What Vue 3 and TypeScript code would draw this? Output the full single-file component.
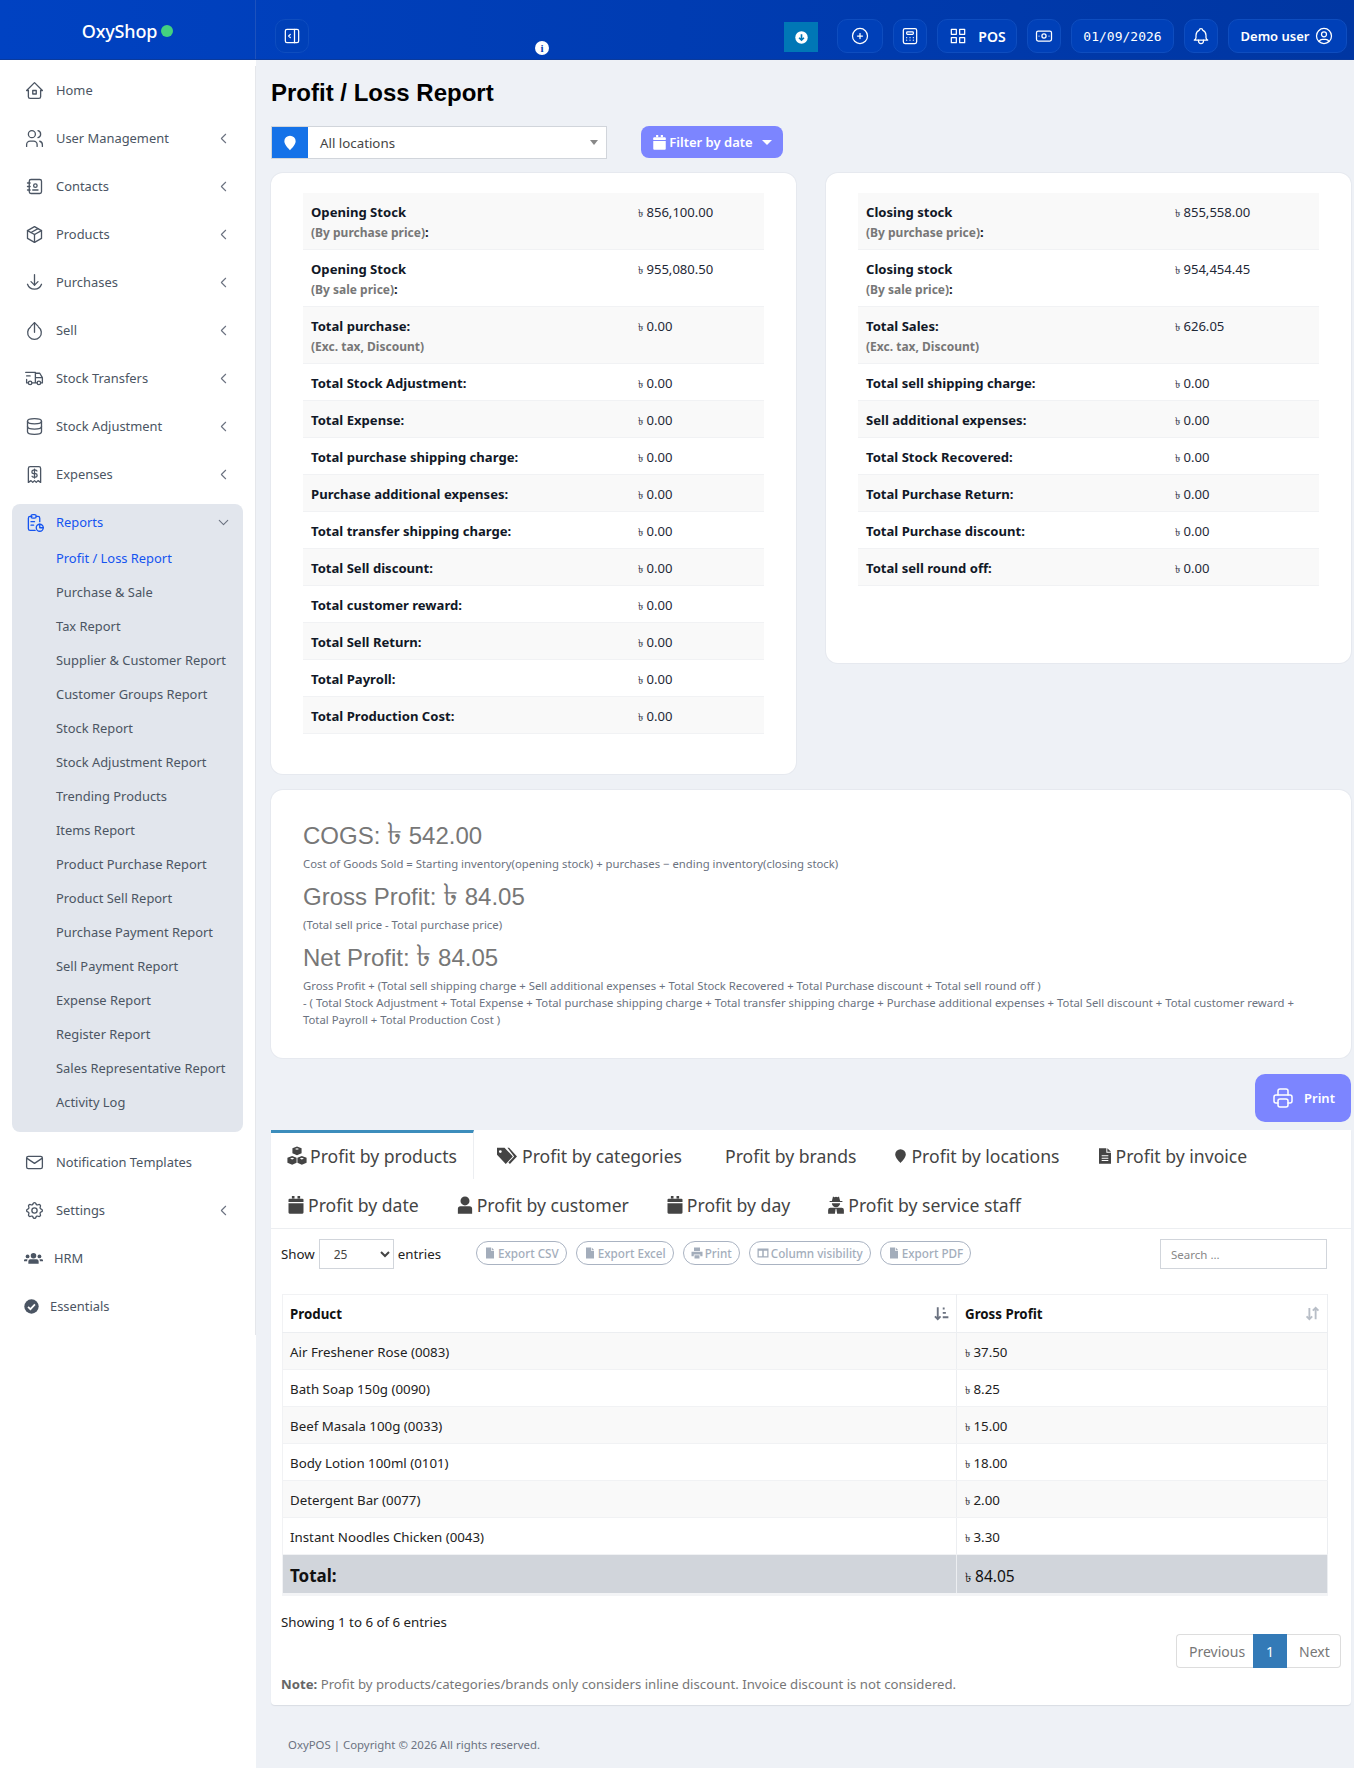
<script setup lang="ts">
import { h } from 'vue'

const P: Record<string, string[]> = {
  home: ['M5 12l-2 0l9 -9l9 9l-2 0', 'M5 12v7a2 2 0 0 0 2 2h10a2 2 0 0 0 2 -2v-7', 'M10 12h4v4h-4z'],
  users: ['M9 7m-4 0a4 4 0 1 0 8 0a4 4 0 1 0 -8 0', 'M3 21v-2a4 4 0 0 1 4 -4h4a4 4 0 0 1 4 4v2', 'M16 3.13a4 4 0 0 1 0 7.75', 'M21 21v-2a4 4 0 0 0 -3 -3.85'],
  book: ['M20 6v12a2 2 0 0 1 -2 2h-10a2 2 0 0 1 -2 -2v-12a2 2 0 0 1 2 -2h10a2 2 0 0 1 2 2z', 'M10 16h6', 'M13 11m-2 0a2 2 0 1 0 4 0a2 2 0 1 0 -4 0', 'M4 8h3', 'M4 12h3', 'M4 16h3'],
  box: ['M12 3l8 4.5l0 9l-8 4.5l-8 -4.5l0 -9l8 -4.5', 'M12 12l8 -4.5', 'M12 12l0 9', 'M12 12l-8 -4.5', 'M16 5.25l-8 4.5'],
  down: ['M12 3v12', 'M8 11l4 4l4 -4', 'M4 14a8.5 8.500 0 0 0 16 0'],
  up: ['M12 14v-11', 'M8 7l4 -4l4 4', 'M7.500 8a7.800 7.800 0 1 0 9 0'],
  truck: ['M7 17m-2 0a2 2 0 1 0 4 0a2 2 0 1 0 -4 0', 'M17 17m-2 0a2 2 0 1 0 4 0a2 2 0 1 0 -4 0', 'M5 17h-2v-4m-1 -8h11v12m-4 0h6m4 0h2v-6h-8m0 -5h5l3 5', 'M3 9l4 0'],
  db: ['M12 6m-8 0a8 3 0 1 0 16 0a8 3 0 1 0 -16 0', 'M4 6v6a8 3 0 0 0 16 0v-6', 'M4 12v6a8 3 0 0 0 16 0v-6'],
  receipt: ['M5 21v-16a2 2 0 0 1 2 -2h10a2 2 0 0 1 2 2v16l-3 -2l-2 2l-2 -2l-2 2l-2 -2l-3 2', 'M14.8 8a2 2 0 0 0 -1.8 -1h-2a2 2 0 1 0 0 4h2a2 2 0 1 1 0 4h-2a2 2 0 0 1 -1.8 -1', 'M12 6v10'],
  report: ['M9 5h-2a2 2 0 0 0 -2 2v12a2 2 0 0 0 2 2h5.697', 'M18 14v4h4', 'M18 11v-4a2 2 0 0 0 -2 -2h-2', 'M8 3m0 2a2 2 0 0 1 2 -2h2a2 2 0 0 1 2 2v0a2 2 0 0 1 -2 2h-2a2 2 0 0 1 -2 -2z', 'M18 18m-4 0a4 4 0 1 0 8 0a4 4 0 1 0 -8 0', 'M8 11h4', 'M8 15h3'],
  mail: ['M3 7a2 2 0 0 1 2 -2h14a2 2 0 0 1 2 2v10a2 2 0 0 1 -2 2h-14a2 2 0 0 1 -2 -2v-10z', 'M3 7l9 6l9 -6'],
  gear: ['M10.325 4.317c.426 -1.756 2.924 -1.756 3.35 0a1.724 1.724 0 0 0 2.573 1.066c1.543 -.94 3.31 .826 2.37 2.37a1.724 1.724 0 0 0 1.065 2.572c1.756 .426 1.756 2.924 0 3.35a1.724 1.724 0 0 0 -1.066 2.573c.94 1.543 -.826 3.31 -2.37 2.37a1.724 1.724 0 0 0 -2.572 1.065c-.426 1.756 -2.924 1.756 -3.35 0a1.724 1.724 0 0 0 -2.573 -1.066c-1.543 .94 -3.31 -.826 -2.37 -2.37a1.724 1.724 0 0 0 -1.065 -2.572c-1.756 -.426 -1.756 -2.924 0 -3.35a1.724 1.724 0 0 0 1.066 -2.573c-.94 -1.543 .826 -3.31 2.37 -2.37c1 .608 2.296 .07 2.572 -1.065z', 'M9 12a3 3 0 1 0 6 0a3 3 0 0 0 -6 0'],
  chevL: ['M15 6l-6 6l6 6'],
  chevD: ['M6 9l6 6l6 -6'],
  calc: ['M4 3m0 2a2 2 0 0 1 2 -2h12a2 2 0 0 1 2 2v14a2 2 0 0 1 -2 2h-12a2 2 0 0 1 -2 -2z', 'M8 7m0 1a1 1 0 0 1 1 -1h6a1 1 0 0 1 1 1v1a1 1 0 0 1 -1 1h-6a1 1 0 0 1 -1 -1z', 'M8 14v.01', 'M12 14v.01', 'M16 14v.01', 'M8 17v.01', 'M12 17v.01', 'M16 17v.01'],
  plus: ['M12 12m-9 0a9 9 0 1 0 18 0a9 9 0 1 0 -18 0', 'M9 12h6', 'M12 9v6'],
  grid: ['M4 4h6v6h-6z', 'M14 4h6v6h-6z', 'M4 14h6v6h-6z', 'M14 14h6v6h-6z'],
  cash: ['M3 8a2 2 0 0 1 2 -2h14a2 2 0 0 1 2 2v8a2 2 0 0 1 -2 2h-14a2 2 0 0 1 -2 -2z', 'M12 12m-2.5 0a2.5 2.5 0 1 0 5 0a2.5 2.5 0 1 0 -5 0', 'M6 12h.01', 'M18 12h.01'],
  bell: ['M10 5a2 2 0 1 1 4 0a7 7 0 0 1 4 6v3a4 4 0 0 0 2 3h-16a4 4 0 0 0 2 -3v-3a7 7 0 0 1 4 -6', 'M9 17v1a3 3 0 0 0 6 0v-1'],
  userc: ['M12 12m-9 0a9 9 0 1 0 18 0a9 9 0 1 0 -18 0', 'M12 10m-3 0a3 3 0 1 0 6 0a3 3 0 1 0 -6 0', 'M6.168 18.849a4 4 0 0 1 3.832 -2.849h4a4 4 0 0 1 3.834 2.855'],
  side: ['M4 6a2 2 0 0 1 2 -2h12a2 2 0 0 1 2 2v12a2 2 0 0 1 -2 2h-12a2 2 0 0 1 -2 -2z', 'M15 4v16', 'M10 10l-2 2l2 2'],
  print: ['M17 17h2a2 2 0 0 0 2 -2v-4a2 2 0 0 0 -2 -2h-14a2 2 0 0 0 -2 2v4a2 2 0 0 0 2 2h2', 'M17 9v-4a2 2 0 0 0 -2 -2h-6a2 2 0 0 0 -2 2v4', 'M7 15a2 2 0 0 1 2 -2h6a2 2 0 0 1 2 2v4a2 2 0 0 1 -2 2h-6a2 2 0 0 1 -2 -2z'],
}
const S: Record<string, string[]> = {
  pin: ['M12 1a8.500 8.500 0 0 0 -8.500 8.500c0 5.500 8.500 13.500 8.500 13.500s8.500 -8 8.500 -13.500a8.500 8.500 0 0 0 -8.500 -8.500z'],
  cal: ['M6.500 0h3.500v3.500h-3.500z', 'M14 0h3.500v3.500h-3.500z', 'M2 5a1.500 1.500 0 0 1 1.500 -1.500h17a1.500 1.500 0 0 1 1.500 1.500v3h-20z', 'M2 9.500h20v12.500a1.500 1.500 0 0 1 -1.500 1.500h-17a1.500 1.500 0 0 1 -1.500 -1.500z'],
  cubes: ['M12 .5l5.500 2.200v6l-5.500 2.300l-5.500 -2.300v-6z M12 2.600l-2.500 1l2.500 1l2.500 -1z', 'M6.200 12l5.300 2.200v6l-5.300 2.300l-5.700 -2.300v-6z M6.200 14.100l-2.500 1l2.500 1l2.500 -1z', 'M17.800 12l5.700 2.200v6l-5.700 2.300l-5.300 -2.300v-6z M17.800 14.100l-2.500 1l2.500 1l2.500 -1z'],
  tags: ['M0 2h9l10 10.500l-8.500 9l-10.500 -11z M4 5a1.700 1.700 0 1 0 0 3.400a1.700 1.700 0 0 0 0 -3.400z', 'M12.500 2h2l9.500 10.500l-8.500 9l-1.800 -1.800l6.800 -7.200z'],
  file: ['M3 .5h11v6.500h7v16.500h-18z M7 11v1.500h10v-1.500z M7 14.500v1.500h10v-1.500z M7 18v1.500h10v-1.500z', 'M15.500 .5l5.500 5h-5.500z'],
  user: ['M12 .5a6 6 0 1 0 0 12a6 6 0 0 0 0 -12z', 'M6 13.500h12a3.500 3.500 0 0 1 3.500 3.500v6.500h-19v-6.500a3.500 3.500 0 0 1 3.500 -3.500z'],
  spy: ['M8 .5l2 1l2 -.5l2 .5l2 -1l1.500 6h3v1.500h-17v-1.500h3z', 'M6.500 9.500h11a5.500 5.500 0 0 1 -11 0z', 'M4.500 15.500h15a3 3 0 0 1 3 3v5h-9l-1 -6.500h-1l-1 6.500h-9v-5a3 3 0 0 1 3 -3z'],
  hrm: ['M12 5a3.500 3.500 0 1 0 0 7a3.500 3.500 0 0 0 0 -7z', 'M4.500 7a2.400 2.400 0 1 0 0 4.800a2.400 2.400 0 0 0 0 -4.800z', 'M19.500 7a2.400 2.400 0 1 0 0 4.800a2.400 2.400 0 0 0 0 -4.800z', 'M8 13h8a2.500 2.500 0 0 1 2.500 2.500v3h-13v-3a2.500 2.500 0 0 1 2.500 -2.500z', 'M1 13h3.500a4 4 0 0 0 -.5 2v.5h-4v-1a1.500 1.500 0 0 1 1 -1.500z', 'M19.500 13h3.500a1.500 1.500 0 0 1 1 1.500v1h-4v-.5a4 4 0 0 0 -.5 -2z'],
  csv: ['M4 1h10v6.500h6v15.500h-16z', 'M15.500 1l4.500 5h-4.500z'],
  cols: ['M1 3h22v18h-22z M3.500 7.500v11h7v-11z M13.500 7.500v11h7v-11z'],
  sprint: ['M6 1h12v7h-12z', 'M1 9.500h22v9h-4.500v-3.500h-13v3.500h-4.500z', 'M7 16.500h10v6.500h-10z'],
}

const Ico = (props: { n: string }) => {
  const solid = S[props.n]
  return h(
    'svg',
    {
      class: 'ico',
      viewBox: '0 0 24 24',
      fill: solid ? 'currentColor' : 'none',
      stroke: solid ? 'none' : 'currentColor',
      'stroke-width': solid ? undefined : 1.5,
      'stroke-linecap': 'round',
      'stroke-linejoin': 'round',
      'fill-rule': 'evenodd',
    },
    (solid || P[props.n] || []).map((d) => h('path', { d })),
  )
}

const menuTop = [
  { n: 'home', t: 'Home', c: false },
  { n: 'users', t: 'User Management', c: true },
  { n: 'book', t: 'Contacts', c: true },
  { n: 'box', t: 'Products', c: true },
  { n: 'down', t: 'Purchases', c: true },
  { n: 'up', t: 'Sell', c: true },
  { n: 'truck', t: 'Stock Transfers', c: true },
  { n: 'db', t: 'Stock Adjustment', c: true },
  { n: 'receipt', t: 'Expenses', c: true },
]
const subs = ['Profit / Loss Report', 'Purchase & Sale', 'Tax Report', 'Supplier & Customer Report', 'Customer Groups Report', 'Stock Report', 'Stock Adjustment Report', 'Trending Products', 'Items Report', 'Product Purchase Report', 'Product Sell Report', 'Purchase Payment Report', 'Sell Payment Report', 'Expense Report', 'Register Report', 'Sales Representative Report', 'Activity Log']

type Row = { l: string; s?: string; c?: boolean; v: string }
const left: Row[] = [
  { l: 'Opening Stock', s: '(By purchase price)', c: true, v: '856,100.00' },
  { l: 'Opening Stock', s: '(By sale price)', c: true, v: '955,080.50' },
  { l: 'Total purchase:', s: '(Exc. tax, Discount)', v: '0.00' },
  { l: 'Total Stock Adjustment:', v: '0.00' },
  { l: 'Total Expense:', v: '0.00' },
  { l: 'Total purchase shipping charge:', v: '0.00' },
  { l: 'Purchase additional expenses:', v: '0.00' },
  { l: 'Total transfer shipping charge:', v: '0.00' },
  { l: 'Total Sell discount:', v: '0.00' },
  { l: 'Total customer reward:', v: '0.00' },
  { l: 'Total Sell Return:', v: '0.00' },
  { l: 'Total Payroll:', v: '0.00' },
  { l: 'Total Production Cost:', v: '0.00' },
]
const right: Row[] = [
  { l: 'Closing stock', s: '(By purchase price)', c: true, v: '855,558.00' },
  { l: 'Closing stock', s: '(By sale price)', c: true, v: '954,454.45' },
  { l: 'Total Sales:', s: '(Exc. tax, Discount)', v: '626.05' },
  { l: 'Total sell shipping charge:', v: '0.00' },
  { l: 'Sell additional expenses:', v: '0.00' },
  { l: 'Total Stock Recovered:', v: '0.00' },
  { l: 'Total Purchase Return:', v: '0.00' },
  { l: 'Total Purchase discount:', v: '0.00' },
  { l: 'Total sell round off:', v: '0.00' },
]
const panels = [
  { k: 'a', rows: left },
  { k: 'b', rows: right },
]
const tabs = [
  { n: 'cubes', t: 'Profit by products' },
  { n: 'tags', t: 'Profit by categories' },
  { n: '', t: 'Profit by brands' },
  { n: 'pin', t: 'Profit by locations' },
  { n: 'file', t: 'Profit by invoice' },
  { n: 'cal', t: 'Profit by date' },
  { n: 'user', t: 'Profit by customer' },
  { n: 'cal', t: 'Profit by day' },
  { n: 'spy', t: 'Profit by service staff' },
]
const exportsList = [
  { n: 'csv', t: 'Export CSV' },
  { n: 'csv', t: 'Export Excel' },
  { n: 'sprint', t: 'Print' },
  { n: 'cols', t: 'Column visibility' },
  { n: 'csv', t: 'Export PDF' },
]
const products = [
  ['Air Freshener Rose (0083)', '37.50'],
  ['Bath Soap 150g (0090)', '8.25'],
  ['Beef Masala 100g (0033)', '15.00'],
  ['Body Lotion 100ml (0101)', '18.00'],
  ['Detergent Bar (0077)', '2.00'],
  ['Instant Noodles Chicken (0043)', '3.30'],
]
</script>

<template>
  <div class="page">
    <header class="top">
      <div class="brand"><span class="brand-name">OxyShop</span><i class="dot"></i></div>
      <div class="top-main">
        <button class="tbtn sq"><Ico n="side" /></button>
        <span class="info">i</span>
        <div class="top-right">
          <span class="teal">
            <svg class="ico" viewBox="0 0 24 24"><circle cx="12" cy="12" r="11.500" fill="#fff" /><path d="M12 6v11M7.500 12.500l4.500 4.500l4.500 -4.500" fill="none" stroke="#0077b6" stroke-width="3" /></svg>
          </span>
          <button class="tbtn wplus"><Ico n="plus" /></button>
          <button class="tbtn sq"><Ico n="calc" /></button>
          <button class="tbtn pos"><Ico n="grid" /><b>POS</b></button>
          <button class="tbtn sq"><Ico n="cash" /></button>
          <button class="tbtn date">01/09/2026</button>
          <button class="tbtn sq"><Ico n="bell" /></button>
          <button class="tbtn usr"><b>Demo user</b><Ico n="userc" /></button>
        </div>
      </div>
    </header>

    <div class="body">
      <aside class="side">
        <nav class="nav">
          <a v-for="m in menuTop" :key="m.t" class="item">
            <Ico :n="m.n" /><span class="lbl">{{ m.t }}</span>
            <Ico v-if="m.c" n="chevL" class="chev" />
          </a>
          <div class="group">
            <a class="ghead"><Ico n="report" /><span class="lbl">Reports</span><Ico n="chevD" class="chev" /></a>
            <a v-for="(s, i) in subs" :key="s" class="sub" :class="{ on: i === 0 }">{{ s }}</a>
          </div>
          <a class="item"><Ico n="mail" /><span class="lbl">Notification Templates</span></a>
          <a class="item"><Ico n="gear" /><span class="lbl">Settings</span><Ico n="chevL" class="chev" /></a>
          <a class="item hrm"><Ico n="hrm" /><span class="lbl">HRM</span></a>
          <a class="item ess"><svg class="ico" viewBox="0 0 24 24"><circle cx="12" cy="12" r="11.500" fill="currentColor" /><path d="M6.500 12.500l3.800 3.800l7.200 -7.600" fill="none" stroke="#fff" stroke-width="2.800" /></svg><span class="lbl">Essentials</span></a>
        </nav>
      </aside>

      <main class="main">
        <h1 class="title">Profit / Loss Report</h1>
        <div class="filters">
          <div class="loc">
            <span class="loc-ic"><Ico n="pin" /></span>
            <span class="loc-t">All locations</span>
            <i class="caret"></i>
          </div>
          <button class="fbtn"><Ico n="cal" />Filter by date<i class="caret w"></i></button>
        </div>

        <div class="cols">
          <section v-for="p in panels" :key="p.k" class="card stat" :class="p.k">
            <table class="st">
              <tbody>
                <tr v-for="(r, i) in p.rows" :key="i">
                  <th>{{ r.l }}<template v-if="r.s"><br /><small>{{ r.s }}</small><template v-if="r.c">:</template></template></th>
                  <td><span class="tk">৳</span> {{ r.v }}</td>
                </tr>
              </tbody>
            </table>
          </section>
        </div>

        <section class="card sum">
          <h3>COGS: <span class="bn">৳</span> 542.00</h3>
          <p>Cost of Goods Sold = Starting inventory(opening stock) + purchases − ending inventory(closing stock)</p>
          <h3>Gross Profit: <span class="bn">৳</span> 84.05</h3>
          <p>(Total sell price - Total purchase price)</p>
          <h3>Net Profit: <span class="bn">৳</span> 84.05</h3>
          <p>Gross Profit + (Total sell shipping charge + Sell additional expenses + Total Stock Recovered + Total Purchase discount + Total sell round off )<br />- ( Total Stock Adjustment + Total Expense + Total purchase shipping charge + Total transfer shipping charge + Purchase additional expenses + Total Sell discount + Total customer reward + Total Payroll + Total Production Cost )</p>
        </section>

        <div class="print-row"><button class="pbtn"><Ico n="print" /><b>Print</b></button></div>

        <section class="tabcard">
          <div class="tabs">
            <a v-for="(t, i) in tabs" :key="t.t" class="tab" :class="{ on: i === 0, noic: !t.n }">
              <Ico v-if="t.n" :n="t.n" :class="'i-' + t.n" /><span>{{ t.t }}</span>
            </a>
          </div>
          <div class="pane">
            <div class="tools">
              <label class="show">Show
                <select class="len"><option>25</option></select>
                entries</label>
              <div class="exports">
                <button v-for="e in exportsList" :key="e.t" class="xb"><Ico :n="e.n" />{{ e.t }}</button>
              </div>
              <input class="search" placeholder="Search ..." />
            </div>
            <table class="dt">
              <thead>
                <tr>
                  <th>Product
                    <svg class="sort" viewBox="0 0 24 24" fill="none" stroke="#6b7280" stroke-width="3"><path d="M6 2v19M1.500 16.500L6 21l4.500 -4.500" /><path d="M14 4h3M14 11h5M14 18h9" /></svg>
                  </th>
                  <th>Gross Profit
                    <svg class="sort" viewBox="0 0 24 24" fill="none" stroke="#b8bec7" stroke-width="3"><path d="M7 3v18M2.500 16.500L7 21l4.500 -4.500" /><path d="M17 21V3M12.500 7.500L17 3l4.500 4.500" /></svg>
                  </th>
                </tr>
              </thead>
              <tbody>
                <tr v-for="r in products" :key="r[0]">
                  <td>{{ r[0] }}</td>
                  <td><span class="tk">৳</span> {{ r[1] }}</td>
                </tr>
              </tbody>
              <tfoot>
                <tr>
                  <td class="tl">Total:</td>
                  <td class="tv"><span class="tk">৳</span> 84.05</td>
                </tr>
              </tfoot>
            </table>
            <div class="showing">Showing 1 to 6 of 6 entries</div>
            <div class="pager">
              <a class="pg">Previous</a><a class="pg cur">1</a><a class="pg">Next</a>
            </div>
            <p class="note"><b>Note:</b> Profit by products/categories/brands only considers inline discount. Invoice discount is not considered.</p>
          </div>
        </section>
        <footer class="foot">OxyPOS | Copyright © 2026 All rights reserved.</footer>
      </main>
    </div>
  </div>
</template>

<style>
html, body { margin: 0; background: #fff; }
</style>

<style scoped>
* { box-sizing: border-box; }
.page { width: 1354px; font-family: "Noto Sans", "Open Sans", sans-serif; font-size: 13.3px; color: #111827; }
.ico { width: 21px; height: 21px; flex: none; display: block; }
button { font-family: inherit; cursor: pointer; padding: 0; }

.top { display: flex; height: 60px; background: linear-gradient(90deg, #0042c2, #0036a2); border-bottom: 1px solid #0a3a9c; }
.brand { width: 256px; flex: none; display: flex; align-items: center; justify-content: center; gap: 4px; border-right: 1px solid #1d52bd; padding-top: 2px; }
.brand-name { color: #fff; font-size: 18px; font-weight: 500; letter-spacing: -.2px; }
.dot { width: 12px; height: 12px; border-radius: 50%; background: #43d17f; }
.top-main { flex: 1; display: flex; align-items: center; padding: 13px 7px 0 19px; position: relative; }
.info { position: absolute; left: 279px; top: 41px; width: 14px; height: 14px; border-radius: 50%; background: #fff; color: #0a3fb0; font: 700 11px/14px "Liberation Serif", serif; text-align: center; }
.tbtn { height: 34px; border-radius: 10px; background: #0040b8; border: 1px solid #0e4dbf; color: #fff; display: flex; align-items: center; justify-content: center; }
.tbtn.sq { width: 34px; }
.tbtn.wplus { width: 46px; }
.tbtn .ico { width: 20px; height: 20px; }
.top-right { margin-left: auto; display: flex; align-items: center; gap: 10px; }
.teal { width: 34px; height: 30px; margin-top: 2px; margin-right: 9px; background: #0077b6; display: flex; align-items: center; justify-content: center; color: #fff; }
.teal .ico { width: 13px; height: 13px; }
.pos { width: 80px; gap: 10px; font-size: 14px; }
.pos b, .usr b { font-weight: 600; }
.date { width: 103px; font: 13px "DejaVu Sans Mono", monospace; }
.usr { width: 119px; gap: 5px; font-size: 13px; }

.body { display: flex; align-items: stretch; }
.side { width: 256px; flex: none; background: #fff; padding-top: 6px; }
.nav { border-right: 1px solid #e5e7eb; height: 1269px; width: 256px; font-size: 12.9px; }
.item { height: 48px; display: flex; align-items: center; padding: 0 24px 0 24px; gap: 11px; color: #4b5563; }
.lbl { flex: 1; white-space: nowrap; }
.chev { width: 17px; height: 17px; color: #6b7280; margin-right: -1px; }
.group { margin: 6px 12px 6px; background: #e2e6ed; border-radius: 8px; padding-bottom: 13px; height: 628px; }
.ghead { height: 36px; display: flex; align-items: center; padding: 0 12px 0 12px; gap: 11px; color: #1554f0; }
.ghead .chev { color: #6b7280; }
.sub { height: 34px; display: flex; align-items: center; padding: 1px 0 0 44px; color: #4b5563; white-space: nowrap; }
.sub.on { color: #1554f0; }
.hrm { gap: 11px; }
.hrm .ico { width: 19px; height: 19px; }
.ess { gap: 11px; }
.ess .ico { width: 15px; height: 15px; }

.main { flex: 1; min-width: 0; background: #eef1f6; padding: 0 3px 0 15px; height: 1708px; }
.title { margin: 0; height: 66px; font: 700 24px/66px "Liberation Sans", Arial, sans-serif; color: #000; }
.filters { display: flex; height: 47px; gap: 34px; align-items: flex-start; }
.loc { width: 336px; height: 33px; display: flex; align-items: center; background: #fff; border: 1px solid #d1d5db; }
.loc-ic { width: 36px; height: 31px; background: #1572e8; color: #fff; display: flex; align-items: center; justify-content: center; }
.loc-ic .ico { width: 16px; height: 16px; }
.loc-t { flex: 1; padding-left: 12px; color: #444; font-size: 13.3px; }
.caret { width: 0; height: 0; border-left: 4px solid transparent; border-right: 4px solid transparent; border-top: 5px solid #888; margin-right: 8px; }
.caret.w { border-top-color: #fff; border-left-width: 5px; border-right-width: 5px; margin: 0 0 0 7px; }
.fbtn { width: 142px; height: 32px; background: #7c85ff; border: 0; border-radius: 8px; color: #fff; font-weight: 600; font-size: 13px; display: flex; align-items: center; justify-content: center; gap: 2px; }
.fbtn .ico { width: 15px; height: 17px; }

.card { background: #fff; border-radius: 12px; box-shadow: 0 0 0 1px #e6e9ef; }
.cols { display: flex; gap: 30px; align-items: flex-start; }
.stat { width: 525px; padding: 20px 32px 40px; }
.stat.b { min-height: 490px; }
.st { width: 100%; border-collapse: collapse; table-layout: fixed; font-size: 13.1px; }
.st tr:nth-child(odd) { background: #f9f9f9; }
.st tr { border-bottom: 1px solid #f1f2f4; }
.st th { text-align: left; font-weight: 700; padding: 9px 8px 7px; line-height: 20px; vertical-align: top; color: #111827; }
.st small { font-size: 12px; color: #777; font-weight: 700; line-height: 1; }
.st td { padding: 9px 8px 7px; line-height: 20px; vertical-align: top; color: #1f2937; width: 134px; }
.stat.b .st td { width: 152px; }
.tk { font-size: 11px; line-height: 0; }
.tv .tk { font-size: 13px; }

.sum { margin-top: 16px; height: 268px; padding: 30px 32px; color: #777; }
.sum h3 { margin: 9px 0 0; height: 31px; padding-top: 1px; font: 400 24px/30px "Liberation Sans", Arial, sans-serif; color: #777; }
.sum h3:first-child { margin-top: 0; }
.sum h3:nth-of-type(3) { height: 32px; padding-top: 2px; margin-top: 8px; }
.bn { font-family: "Noto Sans", "DejaVu Sans", sans-serif; font-size: 30px; line-height: 0; }
.sum p { margin: 4px 0 0; font-size: 11.34px; line-height: 17px; color: #6b7280; }

.print-row { display: flex; justify-content: flex-end; margin-top: 16px; }
.pbtn { width: 96px; height: 48px; background: #7c85ff; border: 0; border-radius: 10px; color: #fff; display: flex; align-items: center; justify-content: center; gap: 9px; font-size: 13px; }
.pbtn .ico { width: 24px; height: 24px; }
.pbtn b { font-weight: 600; }

.tabcard { margin-top: 8px; background: #fff; height: 575px; border-radius: 0 0 4px 4px; box-shadow: 0 1px 1px #d9dde4; }
.tabs { display: flex; flex-wrap: wrap; border-bottom: 1px solid #eceef1; height: 99px; align-content: flex-start; }
.tab { height: 49px; border-top: 3px solid transparent; padding: 0 16px; margin-right: 5px; display: flex; align-items: center; gap: 3px; font-size: 17.6px; color: #444; white-space: nowrap; }
.tab .ico { width: 18px; height: 20px; }
.tab .i-cubes { width: 20px; }
.tab .i-tags { width: 24px; }
.tab .i-pin { width: 15px; }
.tab .i-file { width: 16px; }
.tab .i-cal, .tab .i-user, .tab .i-spy { width: 18px; }
.tab.on { border-top-color: #3c8dbc; border-right: 1px solid #eceef1; }
.tab.noic { padding-left: 22px; }
.pane { padding: 10px 23px 0 10px; }
.tools { display: flex; align-items: flex-start; height: 55px; }
.show { display: flex; align-items: center; gap: 4px; height: 30px; width: 195px; flex: none; color: #222; }
.len { width: 75px; height: 30px; background: #fff; border: 1px solid #d1d5db; padding-left: 10px; font: 12px "Noto Sans", sans-serif; color: #444; }
.exports { display: flex; gap: 9px; padding-top: 2px; }
.xb { height: 24px; border: 1px solid #aab3c2; border-radius: 12px; background: #fff; color: #a3adbb; font-size: 11.7px; font-weight: 500; padding: 0 7px 1px; display: flex; align-items: center; gap: 2px; white-space: nowrap; }
.xb .ico { width: 12px; height: 14px; }
.search { margin-left: auto; margin-right: 1px; width: 167px; height: 30px; border: 1px solid #d1d5db; padding: 0 10px; font: 11.5px "Noto Sans", sans-serif; background: #fff; }
.search::placeholder { color: #888; }

.dt { width: 1046px; margin: 0 0 0 1px; border-collapse: collapse; table-layout: fixed; border-top: 1px solid #f1f2f4; }
.dt th, .dt td { padding: 0 8px; text-align: left; border-right: 1px solid #eceef1; height: 37px; }
.dt th:first-child, .dt td:first-child { width: 674px; border-left: 1px solid #f1f2f4; padding-left: 7px; }
.dt thead th { height: 38px; position: relative; font-weight: 700; color: #111; border-bottom: 1px solid #eceef1; }
.sort { position: absolute; right: 7px; top: 11px; width: 15px; height: 15px; }
.dt tbody tr:nth-child(odd) { background: #f9f9f9; }
.dt tbody td { color: #222; border-bottom: 1px solid #f1f2f4; padding-top: 2px; }
.dt tfoot td { height: 40px; background: #d1d5db; border-bottom: 3px solid #f3f4f6; color: #111; padding-top: 3px; }
.tl { font-size: 17px; font-weight: 700; }
.tv { font-size: 15.5px; }
.showing { margin-top: 16px; height: 20px; line-height: 20px; color: #222; }
.pager { display: flex; justify-content: flex-end; margin: 2px -13px 0 0; }
.pg { height: 34px; padding: 0 12px; line-height: 34px; border: 1px solid #ddd; color: #777; background: #fff; font-size: 14px; }
.pg:first-child { width: 77px; border-right: 0; border-radius: 4px 0 0 4px; padding: 0 0 0 12px; }
.pg:last-child { width: 54px; border-left: 0; border-radius: 0 4px 4px 0; }
.pg.cur { width: 34px; background: #337ab7; border-color: #337ab7; color: #fff; text-align: center; padding: 0; }
.note { margin: 6px 0 0; font-size: 13.2px; line-height: 20px; color: #777; }
.note b { color: #666; }
.foot { margin-top: 30px; padding-left: 17px; height: 20px; line-height: 20px; font-size: 11.4px; color: #6b7280; }
</style>
